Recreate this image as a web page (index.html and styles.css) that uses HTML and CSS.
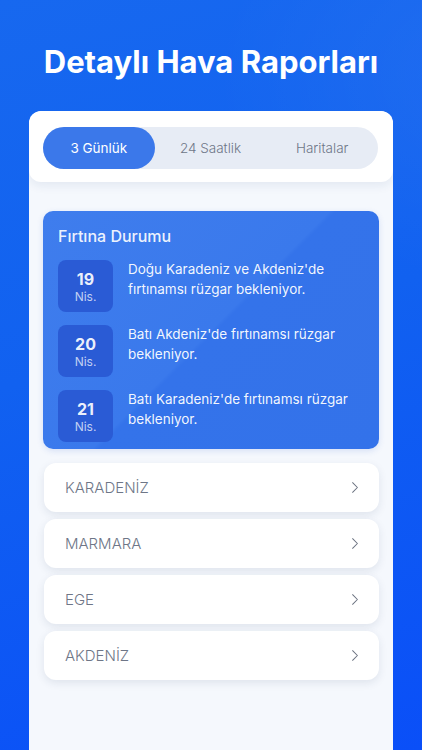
FILE: index.html
```html
<!DOCTYPE html>
<html lang="tr">
<head>
<meta charset="utf-8">
<title>Detaylı Hava Raporları</title>
<link rel="stylesheet" href="styles.css">
</head>
<body>
<div class="screen">
  <h1 class="title">Detaylı Hava Raporları</h1>
  <div class="phone">
    <div class="phone-header">
      <div class="tabs">
        <div class="tab active">3 Günlük</div>
        <div class="tab">24 Saatlik</div>
        <div class="tab">Haritalar</div>
      </div>
    </div>
    <div class="phone-body">
      <div class="storm">
        <div class="storm-title">Fırtına Durumu</div>
        <div class="storm-row">
          <div class="date"><span class="day">19</span><span class="mon">Nis.</span></div>
          <div class="storm-text">Doğu Karadeniz ve Akdeniz'de fırtınamsı rüzgar bekleniyor.</div>
        </div>
        <div class="storm-row">
          <div class="date"><span class="day">20</span><span class="mon">Nis.</span></div>
          <div class="storm-text">Batı Akdeniz'de fırtınamsı rüzgar bekleniyor.</div>
        </div>
        <div class="storm-row">
          <div class="date"><span class="day">21</span><span class="mon">Nis.</span></div>
          <div class="storm-text">Batı Karadeniz'de fırtınamsı rüzgar bekleniyor.</div>
        </div>
      </div>
      <div class="regions">
        <div class="region"><span>KARADENİZ</span><svg class="chev" viewBox="0 0 10 16" width="8" height="13"><path d="M2 2l6 6-6 6" fill="none" stroke="#6b7280" stroke-width="1.3" stroke-linecap="round" stroke-linejoin="round"/></svg></div>
        <div class="region"><span>MARMARA</span><svg class="chev" viewBox="0 0 10 16" width="8" height="13"><path d="M2 2l6 6-6 6" fill="none" stroke="#6b7280" stroke-width="1.3" stroke-linecap="round" stroke-linejoin="round"/></svg></div>
        <div class="region"><span>EGE</span><svg class="chev" viewBox="0 0 10 16" width="8" height="13"><path d="M2 2l6 6-6 6" fill="none" stroke="#6b7280" stroke-width="1.3" stroke-linecap="round" stroke-linejoin="round"/></svg></div>
        <div class="region"><span>AKDENİZ</span><svg class="chev" viewBox="0 0 10 16" width="8" height="13"><path d="M2 2l6 6-6 6" fill="none" stroke="#6b7280" stroke-width="1.3" stroke-linecap="round" stroke-linejoin="round"/></svg></div>
      </div>
    </div>
  </div>
</div>
</body>
</html>
```
FILE: styles.css
```css
* { box-sizing: border-box; }
html, body { margin: 0; padding: 0; }
body {
  width: 422px;
  height: 750px;
  overflow: hidden;
  font-family: Inter, "Noto Sans", sans-serif;
}
.screen {
  width: 422px;
  height: 750px;
  display: flex;
  flex-direction: column;
  background:
    radial-gradient(ellipse 420px 300px at 120% 10%, rgba(255,255,255,0.05), rgba(255,255,255,0) 70%),
    linear-gradient(165deg, #1768ef 0%, #1161f0 45%, #0a4ff8 100%);
}
.title {
  margin: 42px 0 0;
  font-size: 31px;
  line-height: 40px;
  font-weight: 700;
  color: #fff;
  text-align: center;
  letter-spacing: 0;
}
.phone {
  margin: 29px 29px 0;
  flex: 1;
  border-radius: 12px 12px 0 0;
  background: #f5f8fd;
  overflow: hidden;
  display: flex;
  flex-direction: column;
}
.phone-header {
  background: #fff;
  padding: 16px 15px 13px 14px;
  border-radius: 12px;
  box-shadow: 0 4px 10px rgba(30, 60, 120, 0.08);
}
.tabs {
  display: grid;
  grid-template-columns: 1fr 1fr 1fr;
  background: #e7ecf5;
  border-radius: 21px;
  height: 42px;
}
.tab {
  display: flex;
  align-items: center;
  justify-content: center;
  font-size: 13.5px;
  font-weight: 300;
  color: #6e7687;
  border-radius: 21px;
}
.tab.active {
  background: #3b78ea;
  color: #fff;
  font-weight: 400;
}
.phone-body {
  padding: 29px 14px 0;
}
.storm {
  background: linear-gradient(135deg, #3f7ded 0%, #3a79ec 50%, #3473ea 51%, #3372ea 100%);
  border-radius: 10px;
  padding: 15px 15px 7px;
  color: #fff;
  box-shadow: 0 2px 6px rgba(40, 90, 200, 0.15);
}
.storm-title {
  font-size: 16px;
  line-height: 20px;
  font-weight: 500;
  color: rgba(255,255,255,0.92);
  margin-bottom: 14px;
}
.storm-row {
  display: flex;
  gap: 15px;
  margin-bottom: 13px;
}
.storm-row:last-child { margin-bottom: 0; }
.date {
  flex: none;
  width: 55px;
  height: 52px;
  border-radius: 8px;
  background: #2a5bd5;
  display: flex;
  flex-direction: column;
  align-items: center;
  justify-content: center;
}
.day {
  font-size: 16px;
  line-height: 20px;
  font-weight: 700;
  color: rgba(255,255,255,0.92);
}
.mon {
  font-size: 12px;
  line-height: 15px;
  color: rgba(255,255,255,0.72);
}
.storm-text {
  font-size: 13.5px;
  line-height: 20px;
  margin-top: -1px;
  color: rgba(255,255,255,0.95);
}
.regions {
  margin-top: 14px;
  display: flex;
  flex-direction: column;
  gap: 7px;
}
.region {
  height: 49px;
  background: #fff;
  border-radius: 12px;
  box-shadow: 0 3px 8px rgba(30, 50, 90, 0.10);
  display: flex;
  align-items: center;
  justify-content: space-between;
  padding: 0 20px 0 21px;
  font-size: 15px;
  font-weight: 300;
  color: #6e7687;
  margin-left: 1px;
}
.chev { display: block; }
```
